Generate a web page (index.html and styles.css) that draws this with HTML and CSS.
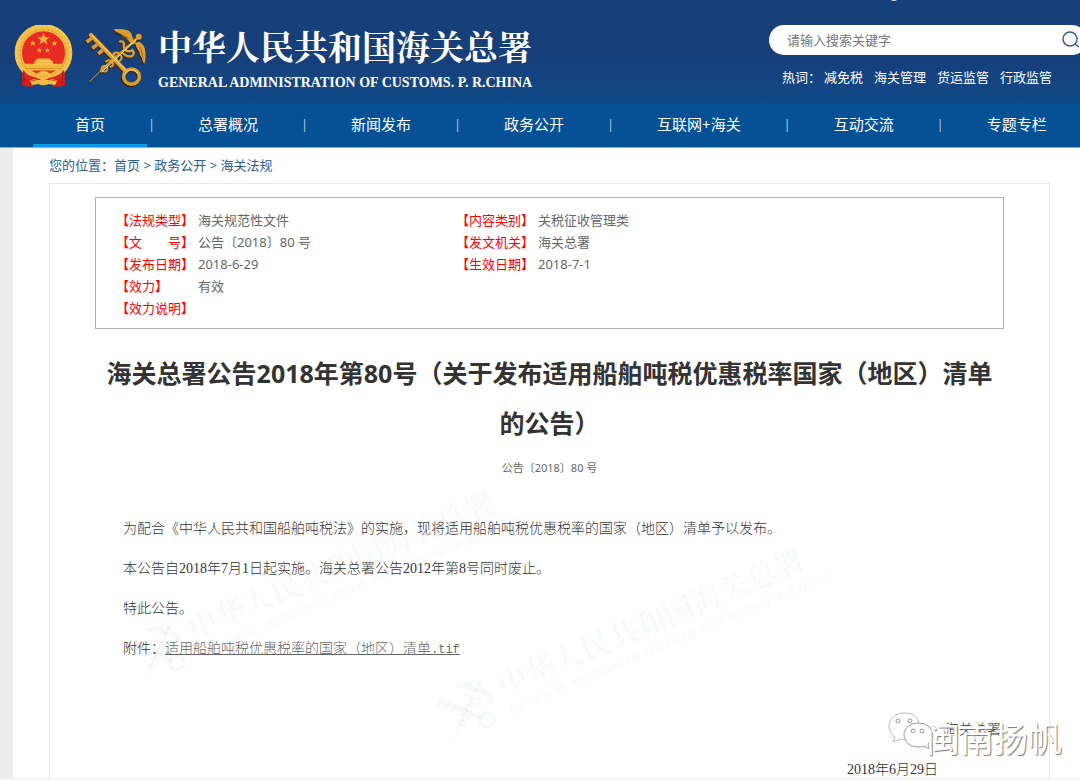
FILE: index.html
```html
<!DOCTYPE html>
<html lang="zh-CN">
<head>
    <meta charset="UTF-8">
    <meta name="viewport" content="width=device-width, initial-scale=1.0">
    <title>海关总署公告2018年第80号</title>
    <link rel="stylesheet" href="styles.css">
</head>
<body>
    <!-- shared shapes -->
    <svg class="defs" width="0" height="0" aria-hidden="true">
        <symbol id="keys" viewBox="252 80 188 184">
            <g fill="none" stroke="currentColor" stroke-linecap="round">
                <path d="M266 245L300 212" stroke-width="3"/>
                <path d="M300 212L412 112" stroke-width="7"/>
                <circle cx="311" cy="206" r="9" stroke-width="5"/>
                <path d="M316 184q10-8 18 2t-4 14M338 160q14-8 22 4t-6 20M342 158q-6 12 6 18" stroke-width="6"/>
                <path d="M358 124q12-4 12 8q-2 14 8 20q10 4 18-2q8 10-2 18q-12 4-26-8" stroke-width="7"/>
                <path d="M270 104L376 214" stroke-width="13"/>
                <path d="M272 114l-15 11M289 133l-15 11M305 150l-13 11" stroke-width="11" stroke-linecap="butt"/>
                <ellipse cx="393" cy="230" rx="24" ry="23" stroke-width="11"/>
            </g>
            <g fill="currentColor">
                <circle cx="415" cy="109" r="9"/>
                <path d="M338 86q28-1 44 3q12 6 16 28l10 8l-10 8q-16-10-22-22q-10-2-16-10q-12-3-22-15z"/>
                <path d="M404 128l12-4q15 8 18 24q4 24-2 44q-7-8-7-18q-8-8-8-19q-8-8-13-27z"/>
            </g>
        </symbol>
    </svg>

    <header class="header">
        <span class="header-dot"></span>
        <a class="brand" href="#">
            <svg class="emblem" viewBox="40 72 178 190" aria-hidden="true">
                <path d="M66 205l-2 48q20 8 34 4l7-18h45l6 18q20 3 38-4l-2-48z" fill="#d71a18"/>
                <circle cx="129" cy="156" r="76" fill="#e92a20" stroke="#f1bd45" stroke-width="22"/>
                <circle cx="129" cy="156" r="83" fill="none" stroke="#fbdc73" stroke-width="3" stroke-dasharray="7 6"/>
                <circle cx="129" cy="156" r="70" fill="none" stroke="#c9861f" stroke-width="2" stroke-dasharray="8 5"/>
                <g fill="#f3b83a">
                    <path d="M129 96l5 13h14l-11 8l4 14l-12-9l-12 9l4-14l-11-8h14z"/>
                    <path d="M97 118l2 6h7l-5 4l2 7l-6-4l-6 4l2-7l-5-4h7z"/>
                    <path d="M162 118l2 6h7l-5 4l2 7l-6-4l-6 4l2-7l-5-4h7z"/>
                    <path d="M117 139l2 6h6l-4 4l2 6l-6-4l-6 4l2-6l-5-4h7z"/>
                    <path d="M141 139l2 6h6l-4 4l2 6l-6-4l-6 4l2-6l-5-4h7z"/>
                    <path d="M109 173h39l4 8h6v8h27l-8 20H80l-9-20h31v-8h4z"/>
                </g>
                <path d="M103 181h53M100 189h58" stroke="#fbe48b" stroke-width="2"/>
                <path d="M74 203h110" stroke="#d67c20" stroke-width="2"/>
                <path d="M67 207q10 18 40 23l20 10 22-10q30-4 42-23l2 24q-18 8-37 5l-10 2H112l-12-2q-20 2-34-5z" fill="#dc2420"/>
                <path d="M108 225q8-12 21-12t22 12q-22-8-43 0z" fill="#f8d15b" stroke="#f1bd45" stroke-width="5"/>
                <path d="M88 239l25 3q16-12 32 0l26-3-7 14-20-3q-15 8-30 0l-20 3z" fill="#f1bd45"/>
                <path d="M70 212v36M187 212v36" stroke="#a81518" stroke-width="3"/>
            </svg>
            <svg class="keys" viewBox="0 0 188 184" aria-hidden="true">
                <g class="keys-shade"><use href="#keys" x="-3" y="4" width="188" height="184"/></g>
                <g class="keys-gold"><use href="#keys" width="188" height="184"/></g>
                <path d="M20 23L123 130M50 137L155 38M119 145q4-14 20-16q16 0 21 12" fill="none" stroke="#ffe08a" stroke-width="3"/>
                <path d="M96 14l36 20M110 28l24 14M168 60l8 34" fill="none" stroke="#7a5017" stroke-width="2"/>
            </svg>
            <span class="brand-text">
                <span class="brand-cn">中华人民共和国海关总署</span>
                <span class="brand-en">GENERAL ADMINISTRATION OF CUSTOMS. P. R.CHINA</span>
            </span>
        </a>

        <div class="tools">
            <form class="search">
                <input type="text" placeholder="请输入搜索关键字" aria-label="请输入搜索关键字">
                <button type="button" aria-label="搜索">
                    <svg width="18" height="18" viewBox="0 0 18 18" fill="none" stroke="#3d5c90" stroke-width="1.5">
                        <circle cx="8" cy="8" r="7"/>
                        <path d="M13 13l4 3"/>
                    </svg>
                </button>
            </form>
            <div class="hot">
                <span class="hot-label">热词：</span>
                <a href="#">减免税</a>
                <a href="#">海关管理</a>
                <a href="#">货运监管</a>
                <a href="#">行政监管</a>
            </div>
        </div>
    </header>

    <nav class="nav">
        <a class="active" href="#">首页</a><span>|</span>
        <a href="#">总署概况</a><span>|</span>
        <a href="#">新闻发布</a><span>|</span>
        <a href="#">政务公开</a><span>|</span>
        <a href="#">互联网+海关</a><span>|</span>
        <a href="#">互动交流</a><span>|</span>
        <a href="#">专题专栏</a>
    </nav>

    <main class="main">
        <div class="page">
            <div class="crumbs">
                您的位置：<a href="#">首页</a> &gt; <a href="#">政务公开</a> &gt; <a href="#">海关法规</a>
            </div>

            <article class="article">
                <div class="meta">
                    <table>
                        <tr>
                            <th>【法规类型】</th><td>海关规范性文件</td>
                            <th>【内容类别】</th><td>关税征收管理类</td>
                        </tr>
                        <tr>
                            <th>【文　　号】</th><td>公告〔2018〕80 号</td>
                            <th>【发文机关】</th><td>海关总署</td>
                        </tr>
                        <tr>
                            <th>【发布日期】</th><td>2018-6-29</td>
                            <th>【生效日期】</th><td>2018-7-1</td>
                        </tr>
                        <tr>
                            <th>【效力】</th><td>有效</td>
                        </tr>
                        <tr>
                            <th>【效力说明】</th><td></td>
                        </tr>
                    </table>
                </div>

                <h1>海关总署公告2018年第80号（关于发布适用船舶吨税优惠税率国家（地区）清单的公告）</h1>
                <p class="doc-no">公告〔2018〕80 号</p>

                <div class="content">
                    <p>为配合《中华人民共和国船舶吨税法》的实施，现将适用船舶吨税优惠税率的国家（地区）清单予以发布。</p>
                    <p>本公告自2018年7月1日起实施。海关总署公告2012年第8号同时废止。</p>
                    <p>特此公告。</p>
                    <p>附件：<a href="#">适用船舶吨税优惠税率的国家（地区）清单<span class="ext">.tif</span></a></p>
                </div>

                <div class="sign">
                    <p>海关总署</p>
                    <p class="date">2018年6月29日</p>
                </div>
            </article>

            <div class="watermark first" aria-hidden="true">
                <svg viewBox="0 0 188 184"><use href="#keys" width="188" height="184"/></svg>
                <div>
                    <div class="wm-cn">中华人民共和国海关总署</div>
                    <div class="wm-en">GENERAL ADMINISTRATION OF CUSTOMS. P. R.CHINA</div>
                </div>
            </div>
            <div class="watermark second" aria-hidden="true">
                <svg viewBox="0 0 188 184"><use href="#keys" width="188" height="184"/></svg>
                <div>
                    <div class="wm-cn">中华人民共和国海关总署</div>
                    <div class="wm-en">GENERAL ADMINISTRATION OF CUSTOMS. P. R.CHINA</div>
                </div>
            </div>

            <div class="account">
                <svg width="44" height="40" viewBox="0 0 44 40" aria-hidden="true">
                    <path d="M16 2C8 2 1 8 1 15q0 7 6 11l-2 5 7-3q12 3 19-6Q34 2 16 2z" fill="#fff" stroke="#bbb"/>
                    <path d="M30 12c-8 0-14 5-14 12s7 12 14 12q4 0 6-1l5 3-1-5q4-4 4-9 0-12-14-12z" fill="#fff" stroke="#999"/>
                    <g fill="#fff" stroke="#999">
                        <circle cx="10" cy="10" r="2"/><circle cx="22" cy="10" r="2"/>
                        <circle cx="25" cy="20" r="2"/><circle cx="34" cy="20" r="2"/>
                    </g>
                </svg>
                <span>闽南扬帆</span>
            </div>
        </div>
    </main>
</body>
</html>
```

FILE: styles.css
```css
* {
    box-sizing: border-box;
}

body {
    margin: 0;
    background: #fafafa;
    font-family: "Noto Sans", "Noto Sans CJK SC", sans-serif;
    font-size: 13px;
    color: #666;
}

a {
    color: inherit;
    text-decoration: none;
}

p {
    margin: 0;
}

.defs {
    position: absolute;
}

/* header */
.header {
    position: relative;
    display: flex;
    justify-content: space-between;
    height: 103px;
    padding-left: 14px;
    overflow: hidden;
    background: linear-gradient(#173f7a 55%, #104a89);
    color: #fff;
}

.header-dot {
    position: absolute;
    top: -7px;
    right: 182px;
    width: 8px;
    height: 8px;
    border-radius: 50%;
    background: #dde4ef;
}

.brand {
    display: flex;
    align-items: flex-start;
    padding-top: 25px;
    white-space: nowrap;
}

.emblem {
    width: 59px;
    height: 63px;
}

.keys {
    width: 62px;
    height: 61px;
    margin: 2px 11px 0 12px;
    overflow: visible;
}

.keys-shade {
    color: #3a2a1c;
}

.keys-gold {
    color: #dc9e32;
}

.brand-text {
    display: flex;
    flex-direction: column;
}

.brand-cn {
    font-family: "Noto Serif CJK SC", "Noto Sans CJK SC", serif;
    font-size: 34px;
    font-weight: bold;
    line-height: 41px;
}

.brand-en {
    font-family: "Liberation Serif", serif;
    font-size: 14px;
    font-weight: bold;
    line-height: 34px;
}

.tools {
    width: 318px;
    margin-right: -7px;
    padding-top: 25px;
    flex-shrink: 0;
}

.search {
    display: flex;
    align-items: center;
    height: 30px;
    padding: 0 7px 0 18px;
    border-radius: 15px;
    background: #fff;
}

.search input {
    flex: 1;
    min-width: 0;
    padding: 0;
    border: 0;
    outline: 0;
    background: none;
    font: inherit;
}

.search input::placeholder {
    color: #777;
}

.search button {
    display: flex;
    padding: 0;
    border: 0;
    background: none;
    cursor: pointer;
}

.hot {
    display: flex;
    gap: 11px;
    padding: 12px 0 0 13px;
    line-height: 20px;
    white-space: nowrap;
}

.hot-label {
    margin-right: -8px;
}

/* nav */
.nav {
    display: flex;
    height: 45px;
    padding-left: 33px;
    overflow: hidden;
    border-bottom: 1px solid #8eacd2;
    background: #065195;
    color: #fff;
    font-size: 15px;
    line-height: 42px;
    white-space: nowrap;
}

.nav a {
    padding: 0 42px;
}

.nav a:last-child {
    padding-right: 0;
}

.nav .active {
    border-bottom: 3px solid #0c9ae6;
}

.nav span {
    width: 9px;
    color: #b5cae0;
    font-size: 12px;
    line-height: 44px;
    text-align: center;
}

/* page */
.main {
    padding-left: 13px;
    border-bottom: 1px solid #f0f0f0;
    background: #ededed;
}

.page {
    position: relative;
    padding: 0 30px 0 36px;
    background: #fff;
}

.crumbs {
    color: #2a5d94;
    line-height: 35px;
}

.article {
    padding: 13px 45px 0;
    border: 1px solid #e5e5e5;
    border-bottom: 0;
}

.meta {
    padding: 11px 20px 9px;
    border: 1px solid #b0b0b0;
}

.meta table {
    border-collapse: collapse;
    line-height: 22px;
}

.meta th,
.meta td {
    padding: 0;
    font-weight: normal;
    text-align: left;
    white-space: nowrap;
}

.meta th {
    width: 82px;
    color: #f00;
}

.meta td {
    width: 258px;
}

h1 {
    margin: 19px 0 10px;
    color: #333;
    font-size: 25px;
    line-height: 50px;
    text-align: center;
}

.doc-no {
    font-size: 11px;
    line-height: 20px;
    text-align: center;
}

.content,
.sign {
    color: #333;
    font-family: "Liberation Serif", "Noto Sans CJK SC", serif;
    font-size: 14px;
    font-weight: 300;
}

.content {
    padding: 31px 28px 0;
    line-height: 40px;
}

.content a {
    color: #666;
    text-decoration: underline;
}

.ext {
    font-family: "Liberation Mono", monospace;
    font-size: 12px;
}

.sign {
    display: flex;
    flex-direction: column;
    align-items: flex-end;
    gap: 24px;
    padding: 52px 3px 0 0;
    line-height: 16px;
}

.sign .date {
    padding-right: 63px;
}

/* tilted marks over the text */
.watermark {
    position: absolute;
    display: flex;
    align-items: center;
    gap: 10px;
    color: rgba(20, 80, 150, 0.04);
    font-weight: bold;
    white-space: nowrap;
    pointer-events: none;
    transform: rotate(-23deg);
}

.watermark svg {
    width: 56px;
    height: 55px;
}

.watermark.first {
    top: 405px;
    left: 102px;
}

.watermark.second {
    top: 462px;
    left: 412px;
}

.wm-cn {
    font-family: "Noto Serif CJK SC", "Noto Sans CJK SC", serif;
    font-size: 30px;
    line-height: 38px;
}

.wm-en {
    font-family: "Liberation Serif", serif;
    font-size: 13px;
    line-height: 20px;
}

.account {
    position: absolute;
    right: 18px;
    bottom: 17px;
    display: flex;
    align-items: flex-start;
    color: #fff;
    font-size: 34px;
    line-height: 44px;
    text-shadow: 1px 1px 1px #777;
}

.account svg {
    margin: -6px -6px 0 0;
}
```
